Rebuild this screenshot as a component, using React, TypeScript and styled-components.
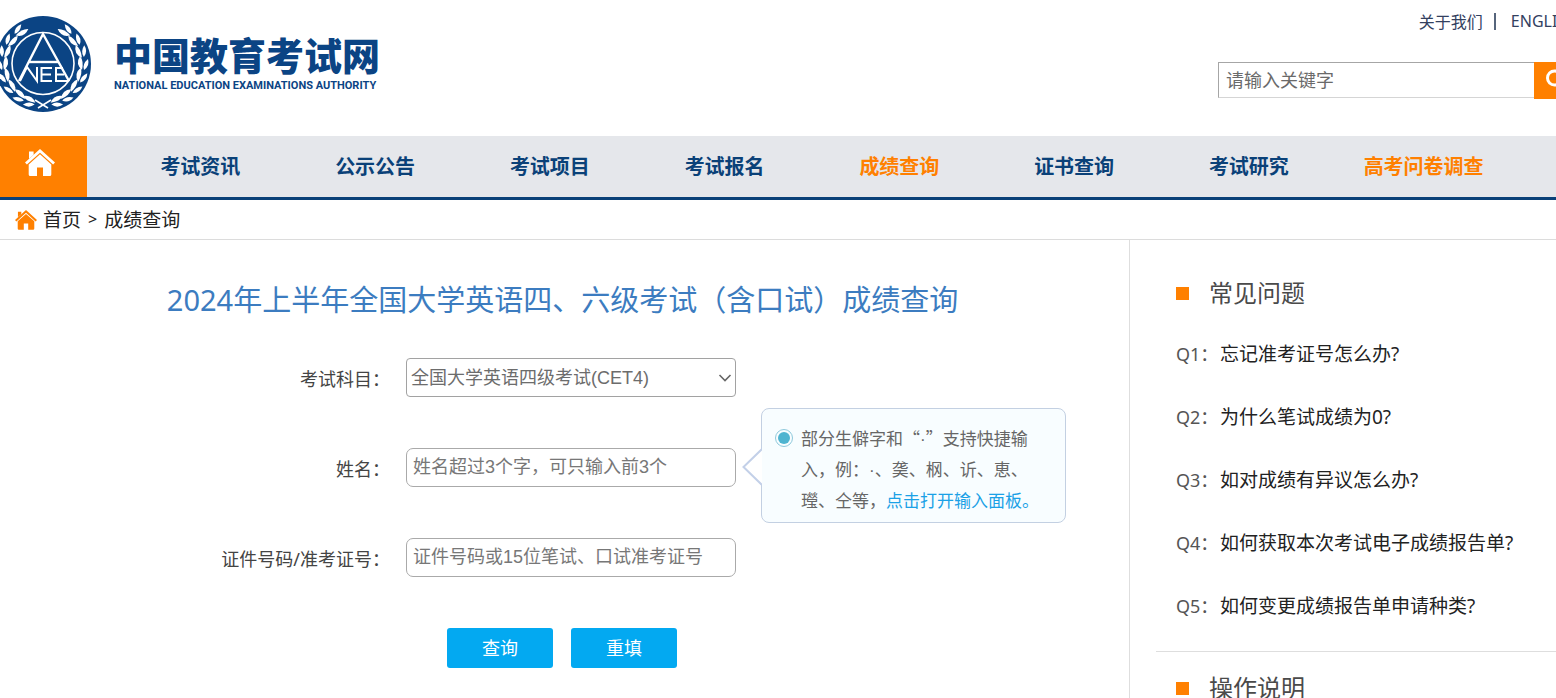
import React from 'react';
import styled, { createGlobalStyle } from 'styled-components';

const navy = '#0a4178';
const orange = '#ff8000';
const sans = '"Noto Sans", "Noto Sans CJK SC", sans-serif';
const cjk = '"Noto Sans CJK SC", sans-serif';
const arial = '"Liberation Sans", "Noto Sans CJK SC", sans-serif';

const GlobalStyle = createGlobalStyle`
  *, *::before, *::after { box-sizing: border-box; }
  body { margin: 0; background: #fff; color: #222; font-family: ${sans}; font-size: 18px; }
  a { color: inherit; text-decoration: none; }
  h1, h2, ul, p { margin: 0; padding: 0; font-weight: 400; }
  ul { list-style: none; }
`;

const Page = styled.div`
  display: flex;
  flex-direction: column;
  min-height: 100vh;
  overflow: hidden;
`;

const Header = styled.header`
  display: flex;
  justify-content: space-between;
  height: 136px;
  margin-right: -26px;
`;

const Brand = styled.a`
  display: flex;
  gap: 23px;
  padding-top: 16px;
  color: #0b4484;
`;

const BrandText = styled.span`
  display: flex;
  flex-direction: column;
  padding-top: 20px;
`;

const BrandName = styled.span`
  font: 900 38px/36px ${cjk};
`;

const BrandSub = styled.span`
  font: 700 11px/28px Roboto, sans-serif;
  white-space: nowrap;
`;

const HeaderTools = styled.div`
  display: flex;
  flex-direction: column;
  width: 364px;
`;

const TopLinks = styled.div`
  display: flex;
  justify-content: flex-end;
  align-items: center;
  height: 42px;
  margin-bottom: 20px;
  padding-right: 4px;
  font-size: 16px;
  color: #33415f;
`;

const Separator = styled.span`
  width: 2px;
  height: 17px;
  margin: 0 15px 0 11px;
  background: #56657c;
`;

const Search = styled.form`
  display: flex;
  align-items: flex-start;
`;

const SearchInput = styled.input`
  flex: 1;
  min-width: 0;
  height: 36px;
  padding: 0 7px;
  border: 1px solid #d5d5d5;
  border-top-color: #a6a6a6;
  border-left-color: #a6a6a6;
  border-right: 0;
  font: 18px ${sans};
  &::placeholder { color: #6a6a6a; opacity: 1; }
`;

const SearchButton = styled.button`
  display: flex;
  align-items: center;
  justify-content: center;
  width: 48px;
  height: 37px;
  padding: 0;
  border: 0;
  background: ${orange};
`;

const Nav = styled.nav`
  display: flex;
  height: 64px;
  background: #e5e7eb;
  border-bottom: 3px solid ${navy};
`;

const HomeLink = styled.a`
  display: flex;
  justify-content: center;
  align-items: flex-start;
  width: 87px;
  padding: 13px 7px 0 0;
  background: ${orange};
  color: #fff;
`;

const NavList = styled.ul`
  display: grid;
  flex: 1;
  grid-template-columns: repeat(8, 1fr);
  padding: 0 45px 0 26px;
`;

const NavLink = styled.a<{ $hot?: boolean }>`
  display: block;
  font: 700 20px/60px ${cjk};
  text-align: center;
  white-space: nowrap;
  color: ${p => (p.$hot ? orange : navy)};
`;

const Crumbs = styled.nav`
  display: flex;
  align-items: center;
  gap: 6px;
  height: 40px;
  padding: 0 0 1px 15px;
  border-bottom: 1px solid #dcdcdc;
  font-size: 19px;
`;

const CrumbIcon = styled.span`
  display: flex;
  padding-top: 2px;
  color: ${orange};
`;

const CrumbArrow = styled.span`
  padding: 0 1px;
  font-size: 16px;
`;

const Main = styled.main`
  display: flex;
  flex: 1;
`;

const QueryPanel = styled.section`
  flex: 1;
  padding-top: 36px;
`;

const Title = styled.h1`
  padding-right: 4px;
  font-size: 29px;
  line-height: 48px;
  text-align: center;
  color: #3c7cc0;
`;

const Form = styled.form`
  display: flex;
  flex-direction: column;
  gap: 51px;
  padding-top: 34px;
`;

const Row = styled.div`
  position: relative;
  display: grid;
  grid-template-columns: 390px 330px;
  column-gap: 16px;
  align-items: center;
  height: 39px;
`;

const Label = styled.label`
  text-align: right;
  color: #444;
`;

const Field = styled.input`
  width: 100%;
  height: 39px;
  padding: 0 6px;
  border: 1px solid #aaa;
  border-radius: 7px;
  font: 18px ${arial};
  &::placeholder { color: #777; opacity: 1; }
`;

const SelectWrap = styled.div`
  display: grid;
  align-items: center;
  & > * { grid-area: 1 / 1; }
  & > svg { justify-self: end; margin-right: 4px; pointer-events: none; }
`;

const Select = styled.select`
  width: 100%;
  height: 39px;
  padding: 0 4px;
  border: 1px solid #a2a2a2;
  border-radius: 4px;
  appearance: none;
  background: #fff;
  font: 18px ${arial};
  color: #6c6c6c;
`;

const Tip = styled.div`
  position: absolute;
  top: -40px;
  left: 761px;
  display: flex;
  gap: 8px;
  width: 305px;
  padding: 13px 24px 7px 13px;
  border: 1px solid #c3d0e2;
  border-radius: 8px;
  background: #f8fdff;
  font-size: 17px;
  line-height: 31px;
  color: #666;
`;

const TipArrow = styled.svg`
  position: absolute;
  top: 39px;
  left: -20px;
`;

const TipRadio = styled.input`
  flex: none;
  width: 18px;
  height: 18px;
  margin: 7px 0 0;
  border: 1px solid #8fc9dc;
  border-radius: 50%;
  appearance: none;
  background: #4fb4d0 content-box;
  padding: 2px;
`;

const TipText = styled.p`
  flex: none;
  width: 240px;
  font-family: ${cjk};
  text-spacing-trim: space-all;
  & > a { color: #1ba1e6; }
`;

const NarrowDot = styled.span`
  font-family: "Liberation Sans", sans-serif;
  line-height: 1;
`;

const Actions = styled.div`
  display: flex;
  justify-content: center;
  gap: 18px;
  padding-right: 5px;
`;

const ActionButton = styled.button`
  width: 106px;
  height: 40px;
  padding: 0 0 2px;
  border: 0;
  border-radius: 3px;
  background: #03a9f1;
  font: 18px ${sans};
  color: #fff;
`;

const Aside = styled.aside`
  width: 427px;
  padding: 17px 0 0 26px;
  border-left: 1px solid #dedede;
`;

const AsideSection = styled.section`
  padding: 16px 0 13px 20px;
  & + & { border-top: 1px solid #dedede; }
`;

const AsideTitle = styled.h2`
  display: flex;
  align-items: center;
  gap: 20px;
  margin-bottom: 10px;
  font-size: 24px;
  line-height: 40px;
  color: #4a4a4a;
  &::before { content: ''; width: 13px; height: 13px; background: ${orange}; }
`;

const Question = styled.li`
  display: flex;
  line-height: 63px;
  & > span { width: 44px; color: #555; white-space: nowrap; }
  & > a { font-size: 19px; }
`;

const House = ({ width }: { width: number }) => (
  <svg width={width} viewBox="0 0 30 27" fill="currentColor" aria-hidden="true">
    <path d="M4 2.5h4.6v3.2L4 10z" />
    <path d="M15 0 30 13.6l-1.9 2L15 3.8 1.900 15.600 0 13.600z" />
    <path d="M15 5.300 26.300 15.400V25.400q0 1.600-1.600 1.600H18v-8.600h-6V27H5.300q-1.600 0-1.600-1.600V15.400z" />
  </svg>
);

const leafAngles = [35, 54, 72, 90, 108, 126, 144, 160];

const Branch = () => (
  <g fill="#fff">
    {leafAngles.map(angle => (
      <g key={angle} transform={`rotate(${90 - angle} 48 48) translate(8 48)`}>
        <path d="M-1 6Q-7 2-5-5Q1 0-1 6z" />
        <path d="M1 6Q-1-3 3-8Q8 0 1 6z" />
      </g>
    ))}
    <path d="M40 84 53 92" fill="none" stroke="#fff" strokeWidth="1.600" />
  </g>
);

const Emblem = () => (
  <svg width="91" height="96" viewBox="5 0 91 96" aria-hidden="true">
    <circle cx="48" cy="48" r="48" fill="#0b4484" />
    <Branch />
    <g transform="translate(96 0) scale(-1 1)"><Branch /></g>
    <circle cx="48" cy="47.500" r="31" fill="#0b4484" stroke="#fff" strokeWidth="1.600" />
    <g fill="none" stroke="#fff" strokeWidth="2.400">
      <path d="M24 65 48 18 74 65" />
      <path d="M33 46H64" />
      <path d="M25 65 32 51 42 65V51" strokeWidth="2" />
      <path d="M57 52H46.500V65H57M46.500 58.500H56M73 65H61V52H68M61 58.500H69" strokeWidth="2" />
    </g>
  </svg>
);

const navItems: [string, boolean?][] = [
  ['考试资讯'], ['公示公告'], ['考试项目'], ['考试报名'],
  ['成绩查询', true], ['证书查询'], ['考试研究'], ['高考问卷调查', true],
];

const questions = [
  '忘记准考证号怎么办?',
  '为什么笔试成绩为0?',
  '如对成绩有异议怎么办?',
  '如何获取本次考试电子成绩报告单?',
  '如何变更成绩报告单申请种类?',
];

export default function App() {
  return (
    <Page>
      <GlobalStyle />
      <Header>
        <Brand href="#">
          <Emblem />
          <BrandText>
            <BrandName>中国教育考试网</BrandName>
            <BrandSub>NATIONAL EDUCATION EXAMINATIONS AUTHORITY</BrandSub>
          </BrandText>
        </Brand>
        <HeaderTools>
          <TopLinks>
            <a href="#about">关于我们</a>
            <Separator />
            <a href="#english">ENGLISH</a>
          </TopLinks>
          <Search role="search">
            <SearchInput type="text" placeholder="请输入关键字" aria-label="请输入关键字" />
            <SearchButton type="button" aria-label="搜索">
              <svg width="26" height="26" viewBox="0 0 26 26" fill="none" stroke="#fff" aria-hidden="true">
                <circle cx="9.500" cy="10" r="7" strokeWidth="3" />
                <path d="m15 15.500 7 7" strokeWidth="4" strokeLinecap="round" />
              </svg>
            </SearchButton>
          </Search>
        </HeaderTools>
      </Header>

      <Nav>
        <HomeLink href="#home" aria-label="首页"><House width={30} /></HomeLink>
        <NavList>
          {navItems.map(([name, hot]) => (
            <li key={name}><NavLink href="#" $hot={hot}>{name}</NavLink></li>
          ))}
        </NavList>
      </Nav>

      <Crumbs>
        <CrumbIcon><House width={22} /></CrumbIcon>
        <a href="#home">首页</a>
        <CrumbArrow>&gt;</CrumbArrow>
        <a href="#score">成绩查询</a>
      </Crumbs>

      <Main>
        <QueryPanel>
          <Title>2024年上半年全国大学英语四、六级考试（含口试）成绩查询</Title>
          <Form>
            <Row>
              <Label htmlFor="subject">考试科目：</Label>
              <SelectWrap>
                <Select id="subject">
                  <option>全国大学英语四级考试(CET4)</option>
                </Select>
                <svg width="14" height="8" viewBox="0 0 14 8" fill="none" stroke="#666" strokeWidth="1.600" aria-hidden="true">
                  <path d="m1.500 1 5.500 5.500L12.500 1" />
                </svg>
              </SelectWrap>
            </Row>
            <Row>
              <Label htmlFor="name">姓名：</Label>
              <Field id="name" type="text" placeholder="姓名超过3个字，可只输入前3个" />
              <Tip>
                <TipArrow width="20" height="38" viewBox="0 0 20 38" fill="#fff" stroke="#c3d0e8" strokeWidth="2" aria-hidden="true">
                  <path d="M20 1 1.500 19 20 37" />
                </TipArrow>
                <TipRadio type="radio" defaultChecked aria-label="快捷输入" />
                <TipText>
                  部分生僻字和“<NarrowDot>·</NarrowDot>”支持快捷输入，例：<NarrowDot>·</NarrowDot>、䶮、㭎、䜣、恵、㼆、仝等，<a href="#panel">点击打开输入面板。</a>
                </TipText>
              </Tip>
            </Row>
            <Row>
              <Label htmlFor="number">证件号码/准考证号：</Label>
              <Field id="number" type="text" placeholder="证件号码或15位笔试、口试准考证号" />
            </Row>
            <Actions>
              <ActionButton type="button">查询</ActionButton>
              <ActionButton type="reset">重填</ActionButton>
            </Actions>
          </Form>
        </QueryPanel>

        <Aside>
          <AsideSection>
            <AsideTitle>常见问题</AsideTitle>
            <ul>
              {questions.map((text, i) => (
                <Question key={text}>
                  <span>Q{i + 1}：</span>
                  <a href="#faq">{text}</a>
                </Question>
              ))}
            </ul>
          </AsideSection>
          <AsideSection>
            <AsideTitle>操作说明</AsideTitle>
          </AsideSection>
        </Aside>
      </Main>
    </Page>
  );
}
